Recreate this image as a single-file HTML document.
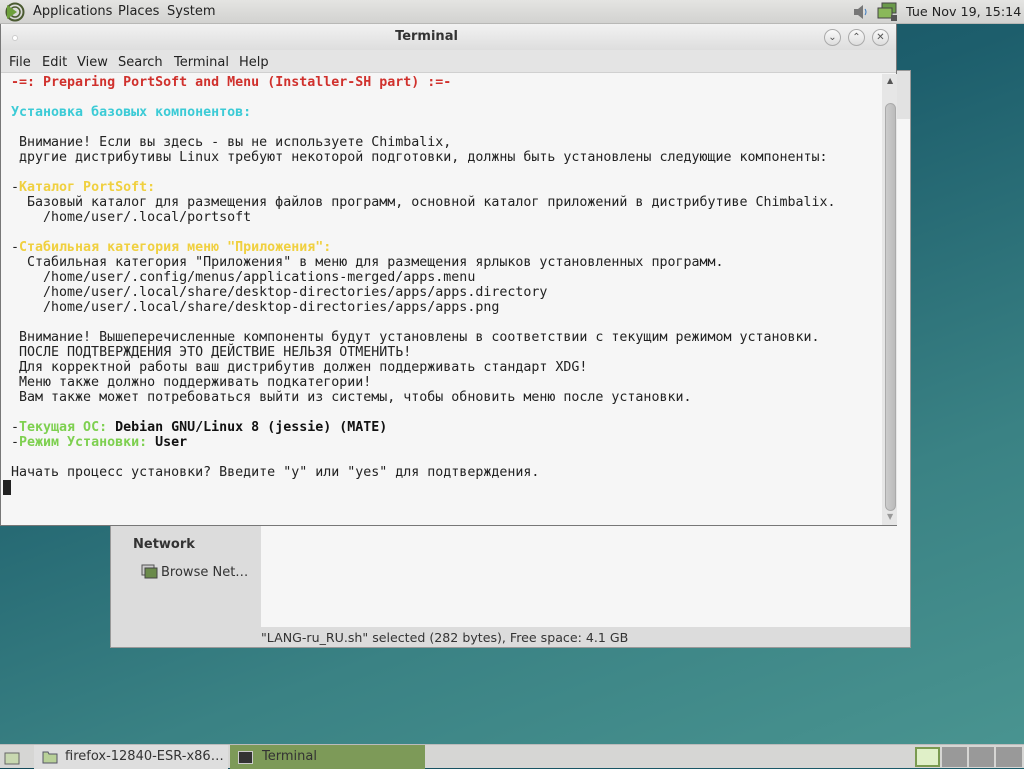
<!DOCTYPE html>
<html><head><meta charset="utf-8"><style>
*{margin:0;padding:0;box-sizing:border-box}
body{width:1024px;height:768px;overflow:hidden;position:relative;font-family:"DejaVu Sans","Liberation Sans",sans-serif;font-size:13px;color:#333;
background:linear-gradient(160deg,#134a5a 0%,#1d5e6c 35%,#3a8284 70%,#4a9591 100%)}
span{white-space:nowrap}
.top{position:absolute;left:0;top:0;width:1024px;height:24px;background:linear-gradient(#e4e4e2,#d2d2d0);border-bottom:1px solid #b8b8b6}
.top span{position:absolute;top:4px;font-size:13px;color:#222}
.fm{position:absolute;left:110px;top:70px;width:801px;height:578px;background:#f6f6f6;border:1px solid #999}
.side{position:absolute;left:0;top:0;width:150px;height:100%;background:#dcdcdc}
.status{position:absolute;left:0;bottom:0;width:100%;height:20px;background:#dcdcdc;font-size:12.6px}
.term{position:absolute;left:0;top:24px;width:897px;height:502px;background:#f6f6f6;border:1px solid #777;border-top:none}
.tbar{position:absolute;left:0;top:0;width:100%;height:26px;background:linear-gradient(#f2f2f2,#dedede);border-radius:5px 5px 0 0}
.menu{position:absolute;left:0;top:26px;width:100%;height:23px;background:#e4e4e4;border-bottom:1px solid #d0d0d0}
.menu span{position:absolute;top:5px;font-size:13px;color:#222}
pre{position:absolute;left:2px;top:51px;font-family:"DejaVu Sans Mono","Liberation Mono",monospace;font-size:13.3px;line-height:15px;color:#222;white-space:pre}
.r{color:#d0312d;font-weight:bold}.c{color:#3ccbd6;font-weight:bold}.y{color:#f0d040;font-weight:bold}.g{color:#7ed050;font-weight:bold}.b{font-weight:bold;color:#111}
.btn{position:absolute;top:5px;width:17px;height:17px;border-radius:50%;border:1px solid #aaa;background:linear-gradient(#fafafa,#ddd);font-size:10px;text-align:center;line-height:15px;color:#555}
.bot{position:absolute;left:0;top:744px;width:1024px;height:24px;background:#d6d6d4;border-top:1px solid #bbb}
</style></head><body>
<div class="top">
<svg style="position:absolute;left:4px;top:2px" width="22" height="20"><circle cx="11" cy="10" r="8.5" fill="none" stroke="#4a5a30" stroke-width="2"/><circle cx="11" cy="10" r="5" fill="none" stroke="#4a5a30" stroke-width="1.5"/><path d="M3 3 L13 10 L3 17Z" fill="#6ea03c"/></svg>
<span style="left:33px">Applications</span><span style="left:118px">Places</span><span style="left:167px">System</span>
<svg style="position:absolute;left:852px;top:4px" width="18" height="16"><path d="M2 5h4l5-4v14l-5-4H2z" fill="#777"/><path d="M13 5q2 3 0 6" stroke="#3a7ac0" fill="none"/></svg>
<svg style="position:absolute;left:876px;top:2px" width="24" height="20"><rect x="6" y="1" width="14" height="10" fill="#6a9a4a" stroke="#444"/><rect x="2" y="6" width="14" height="10" fill="#8ab85a" stroke="#444"/><rect x="15" y="13" width="6" height="6" fill="#555"/></svg>
<span style="left:906px;font-size:12.7px">Tue Nov 19, 15:14</span>
</div>

<div class="fm">
<div style="position:absolute;right:0;top:0;width:20px;height:48px;background:#e2e2e2"></div>
<div class="side">
<div style="position:absolute;left:22px;top:466px;font-weight:bold;font-size:13px;color:#333">Network</div>
<svg style="position:absolute;left:30px;top:493px" width="18" height="16"><rect x="1" y="1" width="12" height="10" fill="#ccc" stroke="#555"/><rect x="4" y="4" width="12" height="10" fill="#6a8a4a" stroke="#444"/></svg>
<div style="position:absolute;left:50px;top:494px;font-size:13px">Browse Net…</div>
</div>
<div class="status"><span style="position:absolute;left:150px;top:3px">"LANG-ru_RU.sh" selected (282 bytes), Free space: 4.1 GB</span></div>
</div>

<div class="term">
<div class="tbar">
<div style="position:absolute;left:11px;top:11px;width:6px;height:6px;border-radius:50%;background:#fff;border:1px solid #ccc"></div>
<div style="position:absolute;left:-22px;width:100%;top:5px;text-align:center;font-weight:bold;font-size:13px;color:#333">Terminal</div>
<div class="btn" style="left:823px">⌄</div><div class="btn" style="left:847px">⌃</div><div class="btn" style="left:871px">✕</div>
</div>
<div class="menu"><span style="left:8px">File</span><span style="left:41px">Edit</span><span style="left:76px">View</span><span style="left:117px">Search</span><span style="left:173px">Terminal</span><span style="left:238px">Help</span></div>
<div style="position:absolute;left:881px;top:50px;width:15px;height:451px;background:#e6e6e6"></div>
<div style="position:absolute;left:884px;top:79px;width:11px;height:408px;border-radius:6px;background:linear-gradient(90deg,#ccc,#bbb);border:1px solid #aaa"></div>
<div style="position:absolute;left:886px;top:52px;font-size:8px;color:#555">▲</div>
<div style="position:absolute;left:886px;top:488px;font-size:8px;color:#999">▼</div>
<pre> <span class="r">-=: Preparing PortSoft and Menu (Installer-SH part) :=-</span>

 <span class="c">Установка базовых компонентов:</span>

  Внимание! Если вы здесь - вы не используете Chimbalix,
  другие дистрибутивы Linux требуют некоторой подготовки, должны быть установлены следующие компоненты:

 -<span class="y">Каталог PortSoft:</span>
   Базовый каталог для размещения файлов программ, основной каталог приложений в дистрибутиве Chimbalix.
     /home/user/.local/portsoft

 -<span class="y">Стабильная категория меню "Приложения":</span>
   Стабильная категория "Приложения" в меню для размещения ярлыков установленных программ.
     /home/user/.config/menus/applications-merged/apps.menu
     /home/user/.local/share/desktop-directories/apps/apps.directory
     /home/user/.local/share/desktop-directories/apps/apps.png

  Внимание! Вышеперечисленные компоненты будут установлены в соответствии с текущим режимом установки.
  ПОСЛЕ ПОДТВЕРЖДЕНИЯ ЭТО ДЕЙСТВИЕ НЕЛЬЗЯ ОТМЕНИТЬ!
  Для корректной работы ваш дистрибутив должен поддерживать стандарт XDG!
  Меню также должно поддерживать подкатегории!
  Вам также может потребоваться выйти из системы, чтобы обновить меню после установки.

 -<span class="g">Текущая ОС:</span> <span class="b">Debian GNU/Linux 8 (jessie) (MATE)</span>
 -<span class="g">Режим Установки:</span> <span class="b">User</span>

 Начать процесс установки? Введите "y" или "yes" для подтверждения.
<span style="background:#222">&#8202;</span></pre>
</div>

<div class="bot">
<svg style="position:absolute;left:4px;top:6px" width="16" height="14"><rect x="1" y="2" width="14" height="11" fill="#c8d8b0" stroke="#666"/></svg>
<div style="position:absolute;left:34px;top:0;width:194px;height:24px;background:#dedede"></div>
<svg style="position:absolute;left:42px;top:5px" width="16" height="14"><path d="M1 2h5l1 2h8v9H1z" fill="#b8d098" stroke="#556"/></svg>
<span style="position:absolute;left:65px;top:4px;font-size:13px;color:#333">firefox-12840-ESR-x86…</span>
<div style="position:absolute;left:230px;top:0;width:195px;height:24px;background:#7d9a58"></div>
<svg style="position:absolute;left:238px;top:6px" width="15" height="13"><rect x="0.5" y="0.5" width="14" height="12" fill="#333" stroke="#ccc"/></svg>
<span style="position:absolute;left:262px;top:4px;font-size:13px;color:#333">Terminal</span>
<div style="position:absolute;left:915px;top:2px;width:25px;height:20px;background:#e0f0c8;border:2px solid #7a9a50"></div>
<div style="position:absolute;left:942px;top:2px;width:25px;height:20px;background:#999"></div>
<div style="position:absolute;left:969px;top:2px;width:25px;height:20px;background:#999"></div>
<div style="position:absolute;left:996px;top:2px;width:26px;height:20px;background:#999"></div>
</div>
</body></html>
